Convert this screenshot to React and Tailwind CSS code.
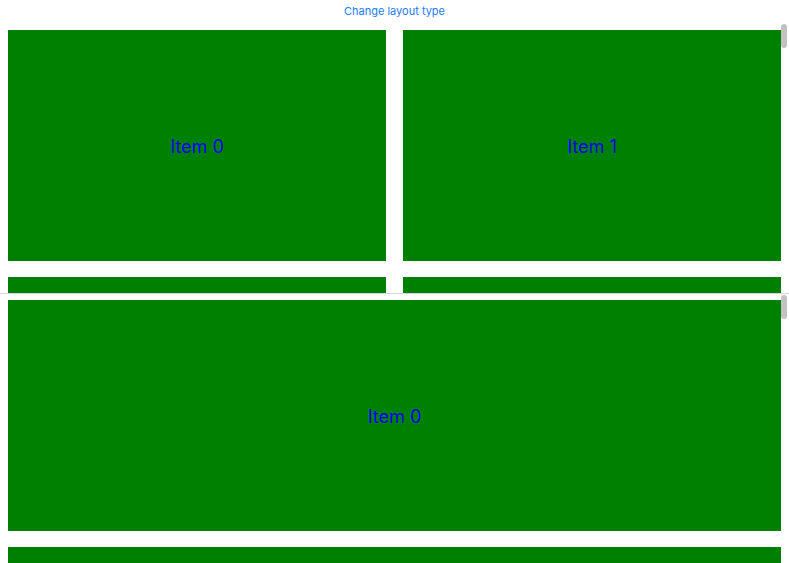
import React from "react";

function Item({ i, className = "" }) {
  return (
    <div className={`bg-[#008000] h-[231px] flex items-center justify-center ${className}`}>
      <span className="text-[#0000ff] text-[18px] font-['Inter',sans-serif] translate-y-[1px]">Item {i}</span>
    </div>
  );
}

export default function App() {
  const items = Array.from({ length: 20 }, (_, i) => i);
  return (
    <div className="h-[563px] w-[789px] flex flex-col overflow-hidden bg-white font-['Inter',sans-serif]">
      <div className="h-[22px] flex items-center justify-center pt-px">
        <button className="text-[11px] text-[#1a7cff] leading-none">Change layout type</button>
      </div>
      <div className="relative h-[271px] shrink-0">
        <div className="h-full overflow-hidden px-2 pt-2">
          <div className="grid grid-cols-2 gap-x-[17px] gap-y-4">
            {items.map((i) => (
              <Item key={i} i={i} />
            ))}
          </div>
        </div>
        <div className="absolute right-[2px] top-[2px] w-[6px] h-[24px] rounded-full bg-[#c2c2c2]" />
      </div>
      <div className="h-px bg-[#d6d6d6] shrink-0" />
      <div className="relative flex-1 min-h-0">
        <div className="h-full overflow-hidden px-2 pt-[6px]">
          <div className="flex flex-col gap-4">
            {items.map((i) => (
              <Item key={i} i={i} />
            ))}
          </div>
        </div>
        <div className="absolute right-[2px] top-[1px] w-[6px] h-[24px] rounded-full bg-[#c2c2c2]" />
      </div>
    </div>
  );
}
